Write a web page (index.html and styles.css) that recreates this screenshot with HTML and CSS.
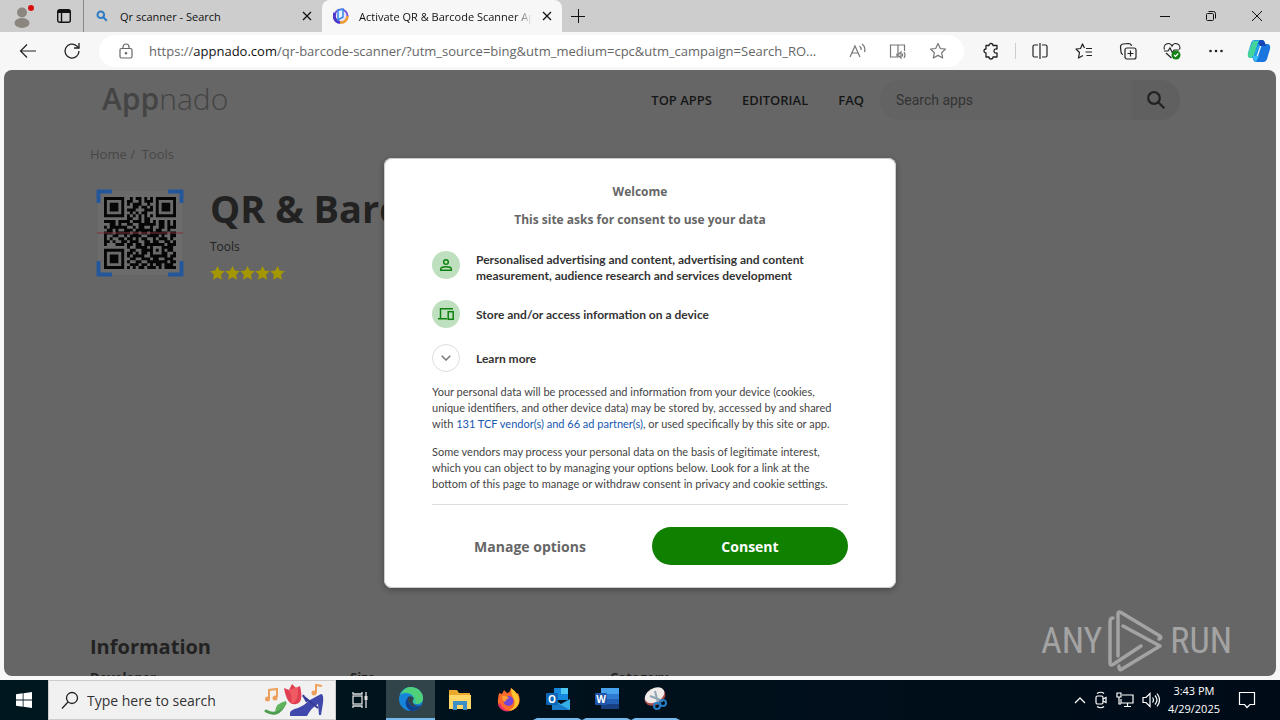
FILE: index.html
```html
<!DOCTYPE html>
<html lang="en">
<head>
    <meta charset="UTF-8">
    <meta name="viewport" content="width=device-width, initial-scale=1.0">
    <title>Activate QR &amp; Barcode Scanner</title>
    <link rel="stylesheet" href="styles.css">
</head>
<body>
    <!-- Tab strip -->
    <header class="tab-strip">
        <button class="strip-btn profile" aria-label="Profile">
            <svg width="24" height="28" viewBox="0 0 24 28"><circle cx="12" cy="10.500" r="5" fill="#8c8680"/><ellipse cx="12" cy="21" rx="7.500" ry="5" fill="#8c8680"/><circle cx="21" cy="6" r="3" fill="#d81010"/></svg>
        </button>
        <button class="strip-btn workspaces" aria-label="Tab actions">
            <svg width="16" height="16" viewBox="0 0 16 16" fill="none" stroke="#111" stroke-width="1.400"><rect x="1.700" y="1.700" width="12.600" height="12.600" rx="2"/><path d="M2 3.500h12" stroke-width="3"/><path d="M5.500 4v10"/></svg>
        </button>
        <div class="tab">
            <svg width="12" height="12" viewBox="0 0 12 12" fill="none" stroke="#2b7cc4" stroke-width="2"><circle cx="4.800" cy="4.800" r="3.300"/><path d="M7.300 7.300l3.500 3.500"/></svg>
            <span class="tab-title">Qr scanner - Search</span>
            <button class="tab-close" aria-label="Close tab"><svg width="10" height="10" viewBox="0 0 10 10" stroke="#111" stroke-width="1.300"><path d="M1 1l8 8M9 1l-8 8"/></svg></button>
        </div>
        <div class="tab active">
            <svg width="16" height="16" viewBox="0 0 16 16"><circle cx="8" cy="8" r="6.500" fill="#e9e4fb" stroke="#7a55d8" stroke-width="2"/><path d="M2 5a6.500 6.500 0 0 0 5 9.500" fill="none" stroke="#4b35c8" stroke-width="3"/><path d="M7 14.500A6.500 6.500 0 0 0 14.500 8" fill="none" stroke="#f0a030" stroke-width="2.500"/><path d="M5 2.500l5-1.500v8l-5 3z" fill="#e5f1ff" stroke="#3988e5" stroke-width="1.500"/></svg>
            <span class="tab-title fade">Activate QR &amp; Barcode Scanner App</span>
            <button class="tab-close" aria-label="Close tab"><svg width="10" height="10" viewBox="0 0 10 10" stroke="#111" stroke-width="1.300"><path d="M1 1l8 8M9 1l-8 8"/></svg></button>
        </div>
        <button class="strip-btn" aria-label="New tab"><svg width="14" height="14" viewBox="0 0 14 14" stroke="#111"><path d="M7.500 0v14M0 7.500h14"/></svg></button>
        <div class="window-controls">
            <button class="win-btn" aria-label="Minimize"><svg width="12" height="12" viewBox="0 0 12 12" stroke="#111"><path d="M1 6.500h10"/></svg></button>
            <button class="win-btn" aria-label="Restore"><svg width="12" height="12" viewBox="0 0 12 12" fill="none" stroke="#111"><rect x="1.500" y="3.500" width="7" height="7" rx="1"/><path d="M3.500 1.500h5a2 2 0 0 1 2 2v5"/></svg></button>
            <button class="win-btn" aria-label="Close"><svg width="12" height="12" viewBox="0 0 12 12" stroke="#111"><path d="M1 1l10 10M11 1L1 11"/></svg></button>
        </div>
    </header>

    <!-- Address bar -->
    <nav class="toolbar">
        <button class="tool-btn" aria-label="Back"><svg width="18" height="16" viewBox="0 0 18 16" fill="none" stroke="#222" stroke-width="1.200"><path d="M17 8H2M8 1.500L1.500 8 8 14.500"/></svg></button>
        <button class="tool-btn" aria-label="Refresh"><svg width="18" height="18" viewBox="0 0 18 18" fill="none" stroke="#222" stroke-width="1.300"><path d="M16 9a7 7 0 1 1-2.500-5.300L16 6"/><path d="M16 1v5h-5"/></svg></button>
        <div class="omnibox">
            <svg width="14" height="16" viewBox="0 0 14 16" fill="none" stroke="#666" stroke-width="1.200"><rect x="1" y="5.500" width="12" height="9.500" rx="1.500"/><path d="M4 5.500V4a3 3 0 0 1 6 0v1.500"/><circle cx="7" cy="10.300" r=".7" fill="#666"/></svg>
            <div class="url" role="textbox" aria-label="Address">https://<b>appnado.com</b>/qr-barcode-scanner/?utm_source=bing&amp;utm_medium=cpc&amp;utm_campaign=Search_RO...</div>
            <button class="omni-btn" aria-label="Read aloud"><svg width="18" height="16" viewBox="0 0 18 16" fill="none" stroke="#777" stroke-width="1.200"><path d="M1 14L6 3l5 11M3 10h6M10.500 3q2 1.500 1.500 4M13 1q4 3 2.500 8"/></svg></button>
            <button class="omni-btn" aria-label="Immersive reader"><svg width="18" height="16" viewBox="0 0 18 16" fill="none" stroke="#777" stroke-width="1.200"><path d="M9 14H1.500V2H9zM9 8V2h6.500v6"/><path d="M8 11h2l2-2v6l-2-2H8zM13.500 10.500v3M15 9q2 3 0 6" /></svg></button>
            <button class="omni-btn" aria-label="Favorite"><svg width="18" height="18" viewBox="0 0 18 18" fill="none" stroke="#777" stroke-width="1.200" stroke-linejoin="round"><path d="M9 1.500l2.300 5 5.200.6-3.900 3.600 1.100 5.300L9 13.400 4.300 16l1.100-5.300L1.500 7.100l5.200-.6z"/></svg></button>
        </div>
        <button class="tool-btn" aria-label="Extensions"><svg width="18" height="18" viewBox="0 0 18 18" fill="none" stroke="#222" stroke-width="1.300" stroke-linejoin="round"><path d="M4 3.500h3a2 2 0 0 1 4 0h4V7q-3-.5-3 2t3 2v4h-4a2 2 0 0 1-4 0H4v-4a2 2 0 0 1 0-4z"/></svg></button>
        <span class="divider"></span>
        <button class="tool-btn" aria-label="Split screen"><svg width="18" height="18" viewBox="0 0 18 18" fill="none" stroke="#222" stroke-width="1.200"><path d="M7 3H3.500A1.500 1.500 0 0 0 2 4.500v9A1.500 1.500 0 0 0 3.500 15H7M11 3h3.500A1.500 1.500 0 0 1 16 4.500v9a1.500 1.500 0 0 1-1.500 1.500H11M9 1v16"/></svg></button>
        <button class="tool-btn" aria-label="Favorites"><svg width="18" height="18" viewBox="0 0 18 18" fill="none" stroke="#222" stroke-width="1.200" stroke-linejoin="round"><path d="M9.500 6L7.500 2 5.500 6.500 1 7l3.500 3.500L3.500 16 8 13.500M11 6.500h6M10.500 10h6.500M11.500 13.500H17"/></svg></button>
        <button class="tool-btn" aria-label="Collections"><svg width="18" height="18" viewBox="0 0 18 18" fill="none" stroke="#222" stroke-width="1.200"><rect x="6" y="6" width="11" height="11" rx="2"/><path d="M11.500 8.500v6M8.500 11.500h6M4 12.500A2.500 2.500 0 0 1 2 10L1.500 5A3 3 0 0 1 4 2l5.500-.5Q12 1.500 12.500 4"/></svg></button>
        <button class="tool-btn" aria-label="Browser essentials"><svg width="18" height="18" viewBox="0 0 18 18" fill="none" stroke="#222" stroke-width="1.200"><path d="M1.500 7.500A4 4 0 0 1 9 4a4 4 0 0 1 7.500 3.500M1 9h4l2-3 2.500 5 1.500-3h5M3 11l5.500 5"/><circle cx="13" cy="13" r="4.500" fill="#148214" stroke="none"/><path d="M11 13l1.500 1.500 2.700-3" stroke="#fff"/></svg></button>
        <button class="tool-btn" aria-label="Settings and more"><svg width="16" height="4" viewBox="0 0 16 4" fill="#222"><circle cx="2.500" cy="2" r="1.300"/><circle cx="8" cy="2" r="1.300"/><circle cx="13.500" cy="2" r="1.300"/></svg></button>
        <button class="tool-btn copilot" aria-label="Copilot"><svg width="26" height="24" viewBox="0 0 26 24"><path d="M8 1h8q2 0 2.600 2L20 7h-6l-4 12H5q-4 0-3-5L5 4q1-3 3-3z" fill="#209ee8"/><path d="M7 2L2 14q-1 5 3 5h2l4-13q1-4 4-4z" fill="#43d39b"/><path d="M18 23h-8q-2 0-2.600-2L6 17h6L16 5h5q4 0 3 5l-3 10q-1 3-3 3z" fill="#1876de"/><path d="M14 1h2q2 0 2.600 2L20 7h-6l-2-3z" fill="#1645b8"/><path d="M9 17h4L10 23q-2-1-4-6z" fill="#37bdf4"/></svg></button>
    </nav>

    <!-- Web page -->
    <main class="viewport">
        <div class="site">
            <div class="site-header">
                <a class="logo" href="#"><strong>App</strong>nado</a>
                <div class="site-nav">
                    <a href="#">TOP APPS</a>
                    <a href="#">EDITORIAL</a>
                    <a href="#">FAQ</a>
                </div>
                <form class="site-search">
                    <input type="text" placeholder="Search apps" aria-label="Search apps">
                    <button type="button" aria-label="Search"><svg width="20" height="20" viewBox="0 0 20 20" fill="none" stroke="#222" stroke-width="2.200"><circle cx="8" cy="8" r="5.800"/><path d="M12.300 12.300l6 6"/></svg></button>
                </form>
            </div>

            <div class="breadcrumb"><a href="#">Home</a> /&nbsp; <a href="#">Tools</a></div>

            <section class="product">
                <svg class="app-icon" width="100" height="100" viewBox="0 0 100 100">
                    <rect x="8" y="8" width="84" height="84" fill="#6b6b6b"/>
                    <path d="M8.500 20V8.500H22M78 8.500h13.500V20M91.500 78v13.500H78M22 91.500H8.500V78" fill="none" stroke="#24569c" stroke-width="4"/>
                    <path id="qrCells" transform="translate(14 14) scale(2.880)" fill="#060606"/>
                    <path d="M7 50h86" stroke="#80303c" stroke-width="1"/>
                </svg>
                <div class="product-info">
                    <h1>QR &amp; Barcode Scanner</h1>
                    <p>Tools</p>
                    <svg width="75" height="14" viewBox="0 0 75 14" fill="#a59700" role="img" aria-label="5 stars">
                        <defs><path id="star" d="M7.500 0l2.200 4.600 5 .6-3.700 3.500 1 5-4.500-2.500L3 13.700l1-5L.3 5.200l5-.6z"/></defs>
                        <use href="#star"/><use href="#star" x="15"/><use href="#star" x="30"/><use href="#star" x="45"/><use href="#star" x="60"/>
                    </svg>
                </div>
            </section>

            <div class="ad-slot"></div>

            <section class="information">
                <h2>Information</h2>
                <div class="info-grid">
                    <strong>Developer</strong>
                    <strong>Size</strong>
                    <strong>Category</strong>
                </div>
            </section>
        </div>

        <div class="overlay">
            <div class="dialog" role="dialog" aria-labelledby="consentTitle">
                <p class="welcome">Welcome</p>
                <h2 id="consentTitle">This site asks for consent to use your data</h2>
                <ul class="purposes">
                    <li>
                        <span class="round"><svg width="16" height="16" viewBox="0 0 16 16" fill="none" stroke="#108010" stroke-width="1.500"><circle cx="8" cy="5" r="2.300"/><path d="M2.700 13.200v-1.200q0-2.300 5.300-2.300t5.300 2.300v1.200z"/></svg></span>
                        <span class="purpose">Personalised advertising and content, advertising and content measurement, audience research and services development</span>
                    </li>
                    <li>
                        <span class="round"><svg width="16" height="14" viewBox="0 0 16 14" fill="none" stroke="#108010" stroke-width="1.500"><path d="M2.500 11V1.700H15M0 11.800h9"/><rect x="10.200" y="4.700" width="5" height="7.600"/></svg></span>
                        <span class="purpose">Store and/or access information on a device</span>
                    </li>
                    <li>
                        <button class="round expand" id="learnMore"><svg width="10" height="6" viewBox="0 0 10 6" fill="none" stroke="#777" stroke-width="1.500"><path d="M.7.700L5 5 9.300.700"/></svg></button>
                        <label class="purpose" for="learnMore">Learn more</label>
                    </li>
                </ul>
                <p class="text">Your personal data will be processed and information from your device (cookies, unique identifiers, and other device data) may be stored by, accessed by and shared with <a href="#">131 TCF vendor(s) and 66 ad partner(s)</a>, or used specifically by this site or app.</p>
                <p class="text">Some vendors may process your personal data on the basis of legitimate interest, which you can object to by managing your options below. Look for a link at the bottom of this page to manage or withdraw consent in privacy and cookie settings.</p>
                <div class="actions">
                    <button class="manage">Manage options</button>
                    <button class="consent">Consent</button>
                </div>
            </div>
        </div>

        <div class="watermark">
            <span>ANY</span>
            <svg width="56" height="62" viewBox="0 0 56 62" fill="none" stroke="#a3a3a3" stroke-width="3.500" stroke-linecap="round" stroke-linejoin="round"><path d="M5 8Q2 8 2 12v41q0 3 3 1.500L33 36"/><path d="M10 46V4q0-3 3-1.500L52 26q2 2-1 3"/><path d="M15 16l37 20L14 59q-3 2-3-2v-1"/></svg>
            <span>RUN</span>
        </div>
    </main>

    <!-- Taskbar -->
    <footer class="taskbar">
        <button class="task start" aria-label="Start"><svg width="16" height="16" viewBox="0 0 16 16" fill="#fff"><path d="M0 2.300L6.700 1.300v6.300H0zM7.500 1.200L16 0v7.600H7.500zM0 8.400h6.700v6.300L0 13.700zM7.500 8.400H16V16l-8.500-1.200z"/></svg></button>
        <div class="task-search">
            <svg width="18" height="18" viewBox="0 0 18 18" fill="none" stroke="#222" stroke-width="1.300"><circle cx="11" cy="7" r="5.500"/><path d="M7 11l-6 6.500"/></svg>
            <input type="text" placeholder="Type here to search" aria-label="Type here to search">
            <svg width="64" height="36" viewBox="0 0 64 36">
                <path d="M3 29q12 7 19-8" fill="none" stroke="#4d9e50" stroke-width="3" stroke-linecap="round"/>
                <path d="M12 29q1-8 11-10-1 9-11 10z" fill="#62b45c"/>
                <path d="M21 6l5 2 3-6 4 4 4-2q4 17-4 18-9 2-12-16z" fill="#df3f50"/><path d="M25 8q5 5 3 14 8-2 7-17z" fill="#f05a62"/>
                <path d="M6 17V8l8-1v8" fill="none" stroke="#eda05c" stroke-width="2"/><circle cx="4.500" cy="17" r="2.500" fill="#eda05c"/><circle cx="12" cy="16" r="2.500" fill="#eda05c"/>
                <path d="M53 11V3l6 1" fill="none" stroke="#eda05c" stroke-width="2"/><circle cx="51" cy="11" r="2.500" fill="#eda05c"/>
                <path d="M27 31q0-3 8-5 7-3 12-8l11-6q3 0 2 9l-2 12h-2l-1-11q-7 4-11 12H27z" fill="#4048ab"/><path d="M40 14l15 12M44 20l-4-7" fill="none" stroke="#353b98" stroke-width="2"/>
            </svg>
        </div>
        <button class="task task-view" aria-label="Task view"><svg width="18" height="18" viewBox="0 0 18 18" fill="none" stroke="#ddd" stroke-width="1.300"><rect x="2" y="5" width="9" height="8"/><path d="M2 1v2h9V1M2 17v-2h9v2M15 1v16"/><path d="M15 5v4" stroke-width="3"/></svg></button>
        <button class="task running current" aria-label="Microsoft Edge"><svg width="26" height="26" viewBox="0 0 26 26"><circle cx="13" cy="13" r="12" fill="#1684d8"/><path d="M2 9Q5 1 13 1q11 1 12 11 0 6-7 6-5 0-3-4 1-6-6-7-5 0-7 2z" fill="#39c4a0"/><path d="M13 1q11 1 12 11 0 6-7 6 1-11-13-12 3-5 8-5z" fill="#5bd669" opacity=".7"/><path d="M10 11q-6 8 3 14 7 0 10-6-8 4-12-2-2-3-1-6z" fill="#123f8c"/><path d="M10 11q3-2 6 1-2 3-1 5 2 4 8 2-8 4-12-2-2-3-1-6z" fill="#31444a"/></svg></button>
        <button class="task" aria-label="File Explorer"><svg width="24" height="22" viewBox="0 0 24 22"><path d="M1 1h8l2 3h11v16H1z" fill="#e8a92c"/><path d="M1 6h22v14H1z" fill="#ffd766"/><path d="M5 21v-9h14v9h-4v-5H9v5z" fill="#3d8fc7"/></svg></button>
        <button class="task" aria-label="Firefox"><svg width="24" height="24" viewBox="0 0 24 24"><path d="M2 5l3 1 2-4 3 3q3 0 4-5 4 3 5 6l2-1q4 9-1 14-6 6-14 3-6-4-5-11z" fill="#ff6a2b"/><path d="M14 0q9 6 8 14-2 8-10 9 8-5 5-12-3-4-3-11z" fill="#ffc52f"/><path d="M3 15q3 7 10 8-8 2-12-6z" fill="#e82d6c"/><circle cx="11.500" cy="13" r="5" fill="#7543d6"/><path d="M5 8q5-1 7 2-3 1-4 4-3-1-3-6z" fill="#ff9c32"/></svg></button>
        <button class="task running" aria-label="Outlook"><svg width="24" height="24" viewBox="0 0 24 24"><path d="M8 1h14v12H8z" fill="#1689dc"/><path d="M15 1h7v6h-7z" fill="#50c8f4"/><path d="M6 12l9 5 9-5v11H6z" fill="#35aee8"/><path d="M6 13l18 10H6z" fill="#187ccb"/><rect y="6" width="12" height="12" rx="1" fill="#0c65b5"/><text x="6" y="16" class="app-letter">O</text></svg></button>
        <button class="task running" aria-label="Word"><svg width="24" height="24" viewBox="0 0 24 24"><path d="M6 1h18v6H6z" fill="#48a3ee"/><path d="M6 7h18v5H6z" fill="#2f7bd3"/><path d="M6 12h18v5H6z" fill="#2260b5"/><path d="M6 17h18v5H6z" fill="#193f83"/><rect y="6" width="12" height="12" rx="1" fill="#1e55ad"/><text x="6" y="16" class="app-letter">W</text></svg></button>
        <button class="task running" aria-label="Snipping Tool"><svg width="26" height="24" viewBox="0 0 26 24"><ellipse cx="12" cy="10" rx="11" ry="8" fill="#a84b48" transform="rotate(-30 12 10)"/><ellipse cx="11.500" cy="8" rx="10.500" ry="7" fill="#f0eae8" transform="rotate(-30 12 8)"/><path d="M12 4l3 12M7 9l13 5" stroke="#8fa5b5" stroke-width="2"/><g fill="none" stroke="#267cc5" stroke-width="2"><circle cx="14" cy="19" r="3"/><circle cx="20" cy="16" r="3"/></g></svg></button>

        <div class="tray">
            <svg width="12" height="8" viewBox="0 0 12 8" fill="none" stroke="#fff" stroke-width="1.300"><path d="M1 7l5-5 5 5"/></svg>
            <svg width="14" height="18" viewBox="0 0 14 18" fill="none" stroke="#fff" stroke-width="1.200"><rect x="2" y="5" width="7" height="8" rx="1.500"/><path d="M9 8l3-1.500v5L9 10M3 2.500q4-2.500 7 0M3 15.500q4 2.500 7 0"/></svg>
            <svg width="18" height="16" viewBox="0 0 18 16" fill="none" stroke="#fff" stroke-width="1.200"><path d="M6 3h11v8H5V7M8 14.500h7M11.500 11v3.500M1 1h4v4H1zM3 5v7h2"/></svg>
            <svg width="18" height="16" viewBox="0 0 18 16" fill="none" stroke="#fff" stroke-width="1.200"><path d="M1 5.500h3l4-4v13l-4-4H1zM10.500 5.500q2 2.500 0 5M13 3.500q4 4.500 0 9M15 1.500q5 6.500 0 13"/></svg>
            <time class="clock">3:43 PM<br>4/29/2025</time>
            <button class="notify" aria-label="Notifications"><svg width="18" height="18" viewBox="0 0 18 18" fill="none" stroke="#fff" stroke-width="1.200"><path d="M1.500 1.500h15v12H12L9 16.500 6.500 13.500h-5z"/></svg></button>
        </div>
    </footer>

    <script>
        // Rows of the QR code, # is a dark cell
        const rows = [
            "#######..#.##.#.#.#######",
            "#.....#.##..#.###.#.....#",
            "#.###.#.#.###..#..#.###.#",
            "#.###.#...##.##.#.#.###.#",
            "#.###.#.###...###.#.###.#",
            "#.....#..#.#.##...#.....#",
            "#######.#.#.#.#.#.#######",
            "........##..#.##.........",
            "####.####.###.##.#.##.#.#",
            "..##.#..##..######.##.#.#",
            "#.######..#.##..#..##.###",
            ".##.#..###.######.##..#..",
            "###.#####.##.##.######.##",
            "#..##..#.####..####.#..##",
            "#.#..##.##.#.##..#.###.#.",
            "##.#..##.###..##.##..##.#",
            "#...###.##.##.#######.###",
            "........#..####.#...####.",
            "#######..##..####.#.#.##.",
            "#.....#.##.#.##.#...##..#",
            "#.###.#.#.####..######.##",
            "#.###.#..##..###.##..###.",
            "#.###.#.#..##..#######.##",
            "#.....#..###.##.#.##.###.",
            "#######.#.#.##.###.#.####"
        ];
        let d = "";
        rows.forEach((row, y) => {
            [...row].forEach((cell, x) => {
                if (cell === "#") d += `M${x} ${y}h1v1h-1z`;
            });
        });
        document.getElementById("qrCells").setAttribute("d", d);
    </script>
</body>
</html>
```

FILE: styles.css
```css
/* CSS Styling */
* {
    box-sizing: border-box;
}

body {
    margin: 0;
    height: 100vh;
    display: flex;
    flex-direction: column;
    overflow: hidden;
    font-family: "Open Sans", sans-serif;
    background-color: #f7f7f7;
}

button {
    border: 0;
    padding: 0;
    background: none;
    font-family: inherit;
    display: flex;
    align-items: center;
    justify-content: center;
}

a {
    color: inherit;
    text-decoration: none;
}

h1, h2, p, ul {
    margin: 0;
    padding: 0;
}

svg {
    flex-shrink: 0;
}

/* Tab strip */
.tab-strip {
    display: flex;
    flex-shrink: 0;
    height: 32px;
    background-color: #cdcdcd;
}

.strip-btn {
    width: 32px;
}

.profile {
    width: 44px;
}

.workspaces {
    border-right: 1px solid #888;
    width: 40px;
}

.tab {
    display: flex;
    align-items: center;
    gap: 12px;
    width: 238px;
    padding: 0 10px 0 12px;
    font-size: 11px;
    color: #111;
}

.tab.active {
    width: 240px;
    gap: 10px;
    padding-left: 11px;
    border-radius: 8px 8px 0 0;
    background-color: #f7f7f7;
}

.tab-title {
    flex: 1;
    overflow: hidden;
    white-space: nowrap;
}

.fade {
    mask-image: linear-gradient(to right, #000 90%, transparent);
}

.window-controls {
    display: flex;
    margin-left: auto;
}

.win-btn {
    width: 46px;
}

/* Address bar */
.toolbar {
    display: flex;
    flex-shrink: 0;
    align-items: center;
    height: 38px;
    padding-left: 6px;
    background-color: #f7f7f7;
}

.tool-btn {
    width: 44px;
    height: 32px;
}

.copilot {
    width: 42px;
}

.omnibox {
    display: flex;
    flex: 1;
    align-items: center;
    min-width: 0;
    height: 32px;
    margin: 0 5px;
    padding: 0 6px 0 20px;
    border-radius: 16px;
    background-color: #fff;
}

.url {
    flex: 1;
    margin-left: 16px;
    overflow: hidden;
    white-space: nowrap;
    font-size: 13px;
    color: #666;
}

.url b {
    font-weight: 400;
    color: #111;
}

.omni-btn {
    width: 40px;
}

.divider {
    width: 1px;
    height: 16px;
    margin: 0 2px;
    background-color: #ccc;
}

/* Site */
.viewport {
    position: relative;
    flex: 1;
    min-height: 0;
    margin: 0 4px 4px;
    border-radius: 8px;
    overflow: hidden;
    background-color: #666;
}

.site {
    max-width: 1100px;
    margin: 0 auto;
    color: #222;
}

.site-header {
    display: flex;
    align-items: center;
    height: 60px;
    padding: 0 10px 0 12px;
}

.logo {
    margin-right: auto;
    padding-bottom: 4px;
    font-size: 30px;
    font-weight: 300;
    color: #444;
}

.logo strong {
    font-weight: 600;
}

.site-nav {
    display: flex;
    gap: 30px;
    margin-right: 16px;
    font-size: 13px;
    font-weight: 600;
    color: #161616;
}

.site-search {
    display: flex;
    width: 300px;
    height: 40px;
    border-radius: 20px;
    overflow: hidden;
    background-color: #636363;
}

.site-search input {
    flex: 1;
    min-width: 0;
    padding: 0 16px;
    border: 0;
    background: none;
    font-family: Roboto, sans-serif;
    font-size: 14px;
}

.site-search input::placeholder {
    color: #333;
}

.site-search button {
    width: 48px;
    background-color: #606060;
}

.breadcrumb {
    padding: 14px 0;
    font-size: 13px;
    line-height: 20px;
    color: #464646;
}

.product {
    display: flex;
    gap: 20px;
    margin-top: 5px;
}

.product-info h1 {
    font-size: 38px;
    line-height: 50px;
}

.product-info p {
    padding: 4px 0 6px;
    font-size: 12px;
    line-height: 20px;
}

.ad-slot {
    height: 348px;
}

.information h2 {
    font-size: 20px;
    line-height: 28px;
}

.info-grid {
    display: grid;
    grid-template-columns: repeat(4, 1fr);
    margin-top: 6px;
    padding-right: 60px;
    font-size: 13px;
    line-height: 20px;
}

/* Consent dialog */
.overlay {
    position: absolute;
    inset: 0;
    display: flex;
    align-items: center;
    justify-content: center;
}

.dialog {
    width: 512px;
    padding: 24px 48px 23px;
    border-radius: 8px;
    background-color: #fff;
    box-shadow: inset 0 0 0 1px #ccc, 0 2px 6px rgba(0, 0, 0, 0.3);
    font-family: Lato, sans-serif;
    color: #444;
}

.welcome, .dialog h2 {
    font-family: "Open Sans", sans-serif;
    font-size: 12px;
    font-weight: 700;
    line-height: 20px;
    text-align: center;
    color: #666;
}

.dialog h2 {
    margin-top: 8px;
}

.purposes {
    display: flex;
    flex-direction: column;
    gap: 16px;
    margin: 21px 0 12px;
    list-style: none;
}

.purposes li {
    display: flex;
    align-items: center;
    gap: 16px;
    font-size: 12px;
    font-weight: 700;
    line-height: 16px;
    color: #333;
}

.purpose {
    padding-top: 1px;
}

.round {
    display: flex;
    flex-shrink: 0;
    align-items: center;
    align-self: flex-start;
    justify-content: center;
    width: 28px;
    height: 28px;
    border-radius: 50%;
    background-color: #bfe0bf;
}

.expand {
    border: 1px solid #ddd;
    background-color: #fff;
}

.text {
    padding-right: 8px;
    font-size: 11px;
    line-height: 16px;
}

.text + .text {
    margin-top: 12px;
}

.text a {
    color: #1558b0;
}

.actions {
    display: grid;
    grid-template-columns: 1fr 1fr;
    gap: 24px;
    margin-top: 12px;
    padding-top: 22px;
    border-top: 1px solid #ddd;
}

.actions button {
    height: 38px;
    border-radius: 19px;
    font-family: "Open Sans", sans-serif;
    font-size: 14px;
    font-weight: 700;
}

.manage {
    color: #666;
}

.consent {
    background-color: #108000;
    color: #fff;
}

/* Watermark over the page corner */
.watermark {
    position: absolute;
    right: 44px;
    bottom: 4px;
    display: flex;
    align-items: center;
    gap: 6px;
    font-family: "Roboto Condensed", "Liberation Sans Narrow", Roboto, sans-serif;
    font-size: 36px;
    font-weight: 400;
    color: #a3a3a3;
}

/* Taskbar */
.taskbar {
    display: flex;
    flex-shrink: 0;
    height: 40px;
    background: linear-gradient(to right, #001720, #000b18);
}

.task {
    width: 49px;
}

.start {
    width: 48px;
}

.task-view {
    width: 50px;
    padding-right: 2px;
}

.running {
    border-bottom: 2px solid #76b9ed;
    border-left: 4px solid transparent;
    border-right: 4px solid transparent;
}

.current {
    border-left: 0;
    border-right: 0;
    background-color: #31444a;
}

.task-search {
    display: flex;
    align-items: center;
    gap: 8px;
    width: 288px;
    padding: 0 8px 0 12px;
    border: 1px solid #ccc;
    background-color: #f1f1f1;
}

.task-search input {
    flex: 1;
    min-width: 0;
    padding: 0;
    border: 0;
    background: none;
    font-family: inherit;
    font-size: 14px;
}

.task-search input::placeholder {
    color: #333;
}

.app-letter {
    font-size: 10px;
    font-weight: 700;
    text-anchor: middle;
    fill: #fff;
}

.tray {
    display: flex;
    align-items: center;
    gap: 8px;
    margin-left: auto;
    padding-right: 14px;
}

.clock {
    font-size: 11px;
    line-height: 18px;
    text-align: center;
    color: #fff;
}

.notify {
    width: 38px;
    height: 40px;
}
```
